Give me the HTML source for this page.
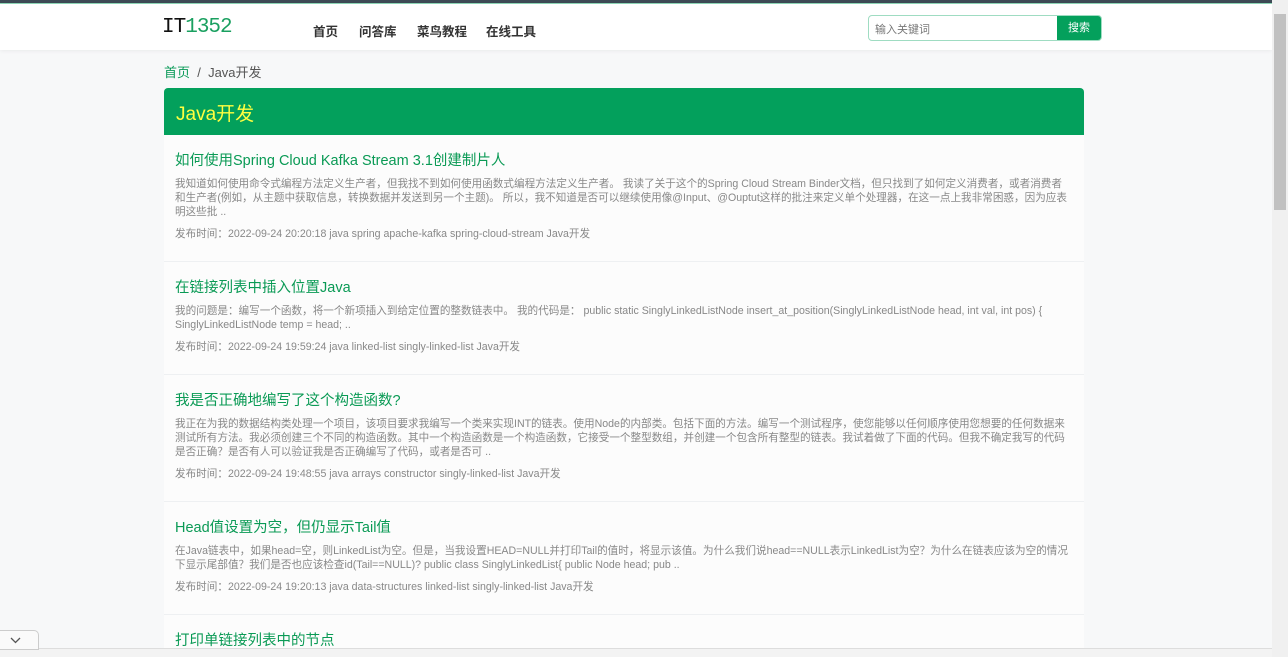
<!DOCTYPE html>
<html><head><meta charset="utf-8"><style>
*{box-sizing:border-box;margin:0;padding:0}
html,body{width:1288px;height:657px;overflow:hidden}
body{background:#f7f8f9;font-family:"Liberation Sans","Noto Sans CJK SC",sans-serif;position:relative}
.top{position:absolute;left:0;top:0;width:1272px;height:4px;background:#3d4a55;border-bottom:1px solid #8fd8b8}
.hdr{position:absolute;left:0;top:4px;width:1272px;height:46px;background:#fff;box-shadow:0 1px 4px rgba(0,0,0,.06)}
.logo{position:absolute;left:162px;top:12px;font-family:"Liberation Mono",monospace;font-size:21px;letter-spacing:-1px;color:#111}
.logo span{color:#1aa060}
.nav{position:absolute;top:17px;font-size:12.5px;font-weight:bold;color:#333}
.search{position:absolute;left:868px;top:11px;width:234px;height:26px;border:1px solid #9fdcc2;border-radius:4px;overflow:hidden;background:#fff}
.search .ph{position:absolute;left:6px;top:5px;font-size:11px;color:#777}
.search .btn{position:absolute;right:0;top:0;width:44px;height:26px;background:#04a05c;color:#fff;font-size:11px;text-align:center;line-height:24px}
.bc{position:absolute;left:164px;top:62px;font-size:13px;color:#555}
.bc a{color:#0a9a58}
.card{position:absolute;left:164px;top:88px;width:920px;height:600px;background:#fff;border-radius:4px;overflow:hidden}
.ch{height:47px;background:#03a05c;color:#ffff40;font-size:19px;padding:11px 12px}
.it{padding:15px 12px 20px 11px;border-bottom:1px solid #eef0f2;background:#fcfcfc}
.t{font-size:14.5px;line-height:22px;color:#0a9a55}
.d{font-size:10.6px;line-height:14px;color:#888;margin-top:5px}
.m{font-size:10.6px;line-height:14px;color:#888;margin-top:8px}
.sb{position:absolute;right:0;top:0;width:16px;height:657px;background:#f0f0f0}
.sb div{position:absolute;left:2px;top:14px;width:12px;height:196px;background:#c1c1c1}
.tab{position:absolute;left:0;top:630px;width:39px;height:20px;background:#fafafa;border:1px solid #ccc;border-left:none;border-radius:0 5px 0 0}
.bot{position:absolute;left:0;top:648px;width:1272px;height:9px;background:#f3f3f3;border-top:1px solid #ddd}
</style></head><body>
<div class="top"></div>
<div class="hdr">
<div class="logo">IT<span>1352</span></div>
<div class="nav" style="left:313px">首页</div>
<div class="nav" style="left:359px">问答库</div>
<div class="nav" style="left:417px">菜鸟教程</div>
<div class="nav" style="left:486px">在线工具</div>
<div class="search"><div class="ph">输入关键词</div><div class="btn">搜索</div></div>
</div>
<div class="bc"><a>首页</a> &nbsp;/&nbsp; Java开发</div>
<div class="card">
<div class="ch">Java开发</div>
<div class="it"><div class="t">如何使用Spring Cloud Kafka Stream 3.1创建制片人</div>
<div class="d">我知道如何使用命令式编程方法定义生产者，但我找不到如何使用函数式编程方法定义生产者。 我读了关于这个的Spring Cloud Stream Binder文档，但只找到了如何定义消费者，或者消费者和生产者(例如，从主题中获取信息，转换数据并发送到另一个主题)。 所以，我不知道是否可以继续使用像@Input、@Ouptut这样的批注来定义单个处理器，在这一点上我非常困惑，因为应表明这些批 ..</div>
<div class="m">发布时间：2022-09-24 20:20:18 java spring apache-kafka spring-cloud-stream Java开发</div></div>
<div class="it"><div class="t">在链接列表中插入位置Java</div>
<div class="d">我的问题是：编写一个函数，将一个新项插入到给定位置的整数链表中。 我的代码是： public static SinglyLinkedListNode insert_at_position(SinglyLinkedListNode head, int val, int pos) { SinglyLinkedListNode temp = head; ..</div>
<div class="m">发布时间：2022-09-24 19:59:24 java linked-list singly-linked-list Java开发</div></div>
<div class="it"><div class="t">我是否正确地编写了这个构造函数?</div>
<div class="d">我正在为我的数据结构类处理一个项目，该项目要求我编写一个类来实现INT的链表。使用Node的内部类。包括下面的方法。编写一个测试程序，使您能够以任何顺序使用您想要的任何数据来测试所有方法。我必须创建三个不同的构造函数。其中一个构造函数是一个构造函数，它接受一个整型数组，并创建一个包含所有整型的链表。我试着做了下面的代码。但我不确定我写的代码是否正确？是否有人可以验证我是否正确编写了代码，或者是否可 ..</div>
<div class="m">发布时间：2022-09-24 19:48:55 java arrays constructor singly-linked-list Java开发</div></div>
<div class="it"><div class="t">Head值设置为空，但仍显示Tail值</div>
<div class="d">在Java链表中，如果head=空，则LinkedList为空。但是，当我设置HEAD=NULL并打印Tail的值时，将显示该值。为什么我们说head==NULL表示LinkedList为空？为什么在链表应该为空的情况下显示尾部值？我们是否也应该检查id(Tail==NULL)? public class SinglyLinkedList{ public Node head; pub ..</div>
<div class="m">发布时间：2022-09-24 19:20:13 java data-structures linked-list singly-linked-list Java开发</div></div>
<div class="it"><div class="t">打印单链接列表中的节点</div></div>
</div>
<div class="bot"></div>
<div class="tab"><svg width="38" height="19" viewBox="0 0 38 19"><path d="M11 7 L15.5 11.5 L20 7" fill="none" stroke="#555" stroke-width="1.3"/></svg></div>
<div class="sb"><div></div></div>
</body></html>
